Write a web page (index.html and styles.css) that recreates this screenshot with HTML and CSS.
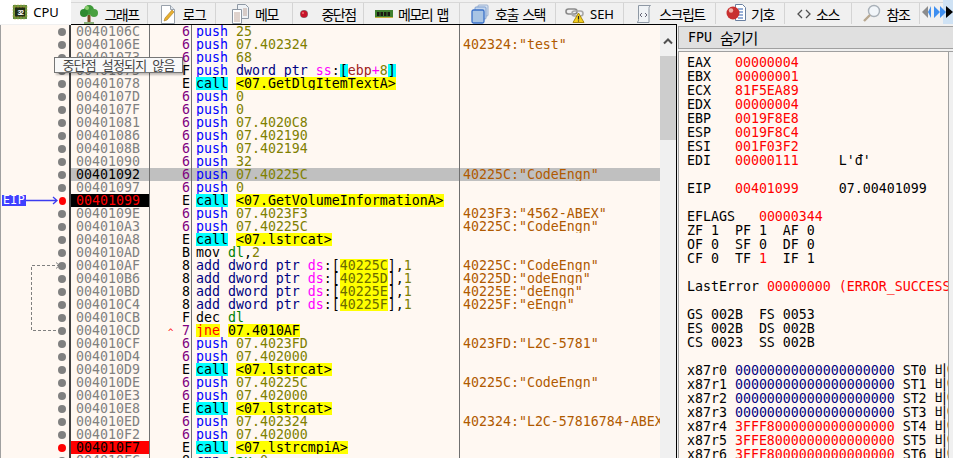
FILE: index.html
```html
<!DOCTYPE html>
<html lang="ko">
<head>
<meta charset="utf-8">
<title>x32dbg CPU</title>
<link rel="stylesheet" href="styles.css">
</head>
<body>
<nav class="tabs">
  <div class="tab active"><svg class="ico" viewBox="0 0 16 16"><rect x="1" y="1" width="14" height="14" fill="#5a8a3a"/><rect x="3" y="3" width="10" height="10" fill="#1c2a14"/><path d="M0 3h16M0 6h16M0 9h16M0 12h16M3 0v16M6 0v16M9 0v16M12 0v16" stroke="#c8b040" stroke-width=".7" opacity=".7"/><rect x="3" y="4" width="10" height="8" fill="#1c2a14"/><text x="8" y="11" class="chip">32</text></svg><span class="lat">CPU</span></div>
  <div class="tab"><svg class="ico big" viewBox="0 0 20 20"><rect x="8.500" y="11" width="3" height="7" fill="#7a4a20"/><path d="M5 19h10" stroke="#6a9a50" stroke-width="1.500"/><circle cx="10" cy="6" r="5" fill="#3f9a3a"/><circle cx="5" cy="9" r="4" fill="#2f8a30"/><circle cx="15" cy="9" r="4" fill="#4aa040"/><circle cx="8" cy="4" r="2" fill="#8fd070"/></svg><span>그래프</span></div>
  <div class="tab"><svg class="ico big" viewBox="0 0 20 20"><path d="M3.500 1.500h9l4 4v14h-13z" fill="#fff" stroke="#9aa2ac"/><path d="M12.500 1.500v4h4" fill="#dfe6ee" stroke="#9aa2ac"/><path d="M6 17l1-3 7-8 2 2-7 8z" fill="#e8b030" stroke="#a87820" stroke-width=".6"/></svg><span>로그</span></div>
  <div class="tab"><svg class="ico big" viewBox="0 0 20 20"><path d="M7.500 .5h8l3 3v11h-11z" fill="#eef2f6" stroke="#8e98a4"/><path d="M2.500 5.500h9v14h-9z" fill="#fff" stroke="#8e98a4"/><path d="M4 9h6M4 11h6M4 13h6M4 15h6M4 17h6M13 5h4M13 7h4M13 9h4M13 11h4" stroke="#b09080" stroke-width=".8"/></svg><span>메모</span></div>
  <div class="tab"><svg class="ico dot" viewBox="0 0 8 8"><circle cx="4" cy="4" r="3.500" fill="#c8142a"/><circle cx="3" cy="3" r="1" fill="#f07070"/></svg><span>중단점</span></div>
  <div class="tab"><svg class="ico ram" viewBox="0 0 18 8"><rect y="0" width="18" height="8" fill="#3f7f30"/><path d="M2 2h2.500v4H2zM5.500 2H8v4H5.500zM9 2h2.500v4H9zM12.500 2H15v4h-2.500z" fill="#1a1a10"/><path d="M0 7.500h18" stroke="#c8b040"/></svg><span>메모리 맵</span></div>
  <div class="tab"><svg class="ico big" viewBox="0 0 20 20"><rect x="8" y="1" width="10" height="11" rx="1" fill="#d4e0f0" stroke="#9ab0d0"/><rect x="5" y="3" width="11" height="12" rx="1" fill="#c4d6ec" stroke="#80a0d0"/><rect x="2" y="6" width="12" height="13" rx="1.500" fill="#a8c4e4" stroke="#3a70c8" stroke-width="1.300"/></svg><span>호출 스택</span></div>
  <div class="tab"><svg class="ico big" viewBox="0 0 20 20"><rect x="1" y="5" width="11" height="5" rx="2.500" fill="none" stroke="#8a8a8a" stroke-width="1.600"/><rect x="7" y="7" width="11" height="5" rx="2.500" fill="none" stroke="#a8a8a8" stroke-width="1.600"/><path d="M13.500 9L19 18.500H8z" fill="#f4d020" stroke="#a88810"/><path d="M13.500 12v3.500M13.500 16.500v1" stroke="#222" stroke-width="1.200"/></svg><span class="lat">SEH</span></div>
  <div class="tab"><svg class="ico big" viewBox="0 0 20 20"><path d="M4.500 1.500h12c-1.500 1-1.500 2-1.500 3v14h-12c1.500-1 1.500-2 1.500-3z" fill="#f0f3f6" stroke="#8e98a4"/><path d="M8 9l-2 2 2 2M11 9l2 2-2 2" fill="none" stroke="#667" stroke-width="1"/></svg><span>스크립트</span></div>
  <div class="tab"><svg class="ico big" viewBox="0 0 20 20"><path d="M9.500 .5h7l3 3v13h-10z" fill="#fff" stroke="#6a80a0"/><path d="M12 5h5M12 8h5M12 11h5M12 14h5" stroke="#3060b0" stroke-width="1.200"/><circle cx="7" cy="9" r="6.500" fill="#c83030"/><circle cx="5" cy="6.500" r="2.200" fill="#f0b0a8"/></svg><span>기호</span></div>
  <div class="tab"><svg class="ico src" viewBox="0 0 14 10"><path d="M5 1L1 5l4 4M9 1l4 4-4 4" fill="none" stroke="#505050" stroke-width="1.300"/></svg><span>소스</span></div>
  <div class="tab"><svg class="ico big" viewBox="0 0 20 20"><circle cx="12" cy="7" r="5.500" fill="#f2f6fa" stroke="#a8b0b8" stroke-width="1.400"/><path d="M8 11l-6 6" stroke="#b8a890" stroke-width="2.400"/></svg><span>참조</span></div>
  <div class="scroller"><svg viewBox="0 0 33 24" width="33" height="24"><rect x="23" y="0" width="10" height="24" fill="#cfe2f4"/><path d="M8 6v12l-6-6z" fill="#8c8c8c"/><path d="M11 6v12l-3-6zM14 6l6 6-6 6zM20 6l6 6-6 6z" fill="#3f8ff0"/><path d="M26 6l7 6-7 6z" fill="#000"/></svg></div>
</nav>

<main class="main">
  <section class="code">
    <div class="rows">
      <div class="row"><div class="gut"><i class="dot"></i></div><div class="addr">0040106C</div><div class="hex pu">6</div><div class="dis"><b class="bl">push</b> <b class="ol">25</b></div><div class="cmt"></div></div>
      <div class="row"><div class="gut"><i class="dot"></i></div><div class="addr">0040106E</div><div class="hex pu">6</div><div class="dis"><b class="bl">push</b> <b class="ol">07.402324</b></div><div class="cmt">402324:"test"</div></div>
      <div class="row"><div class="gut"><i class="dot"></i></div><div class="addr">00401073</div><div class="hex pu">6</div><div class="dis"><b class="bl">push</b> <b class="ol">68</b></div><div class="cmt"></div></div>
      <div class="row"><div class="gut"><i class="dot"></i></div><div class="addr">00401075</div><div class="hex">F</div><div class="dis"><b class="bl">push</b> <b class="nv">dword ptr</b> <b class="mg">ss</b><b class="k">:</b><b class="cy">[</b><b class="mr">ebp</b><b class="mg">+</b><b class="ol">8</b><b class="cy">]</b></div><div class="cmt"></div></div>
      <div class="row"><div class="gut"><i class="dot"></i></div><div class="addr">00401078</div><div class="hex">E</div><div class="dis"><b class="cy">call</b> <b class="ye">&lt;07.GetDlgItemTextA&gt;</b></div><div class="cmt"></div></div>
      <div class="row"><div class="gut"><i class="dot"></i></div><div class="addr">0040107D</div><div class="hex pu">6</div><div class="dis"><b class="bl">push</b> <b class="ol">0</b></div><div class="cmt"></div></div>
      <div class="row"><div class="gut"><i class="dot"></i></div><div class="addr">0040107F</div><div class="hex pu">6</div><div class="dis"><b class="bl">push</b> <b class="ol">0</b></div><div class="cmt"></div></div>
      <div class="row"><div class="gut"><i class="dot"></i></div><div class="addr">00401081</div><div class="hex pu">6</div><div class="dis"><b class="bl">push</b> <b class="ol">07.4020C8</b></div><div class="cmt"></div></div>
      <div class="row"><div class="gut"><i class="dot"></i></div><div class="addr">00401086</div><div class="hex pu">6</div><div class="dis"><b class="bl">push</b> <b class="ol">07.402190</b></div><div class="cmt"></div></div>
      <div class="row"><div class="gut"><i class="dot"></i></div><div class="addr">0040108B</div><div class="hex pu">6</div><div class="dis"><b class="bl">push</b> <b class="ol">07.402194</b></div><div class="cmt"></div></div>
      <div class="row"><div class="gut"><i class="dot"></i></div><div class="addr">00401090</div><div class="hex pu">6</div><div class="dis"><b class="bl">push</b> <b class="ol">32</b></div><div class="cmt"></div></div>
      <div class="row sel"><div class="gut"><i class="dot"></i></div><div class="addr">00401092</div><div class="hex pu">6</div><div class="dis"><b class="bl">push</b> <b class="ol">07.40225C</b></div><div class="cmt">40225C:"CodeEngn"</div></div>
      <div class="row"><div class="gut"><i class="dot"></i></div><div class="addr">00401097</div><div class="hex pu">6</div><div class="dis"><b class="bl">push</b> <b class="ol">0</b></div><div class="cmt"></div></div>
      <div class="row"><div class="gut"><span class="eip">EIP</span><svg class="eip-arrow" viewBox="0 0 33 9"><path d="M0 4.500h31M27 1l4 3.500-4 3.500" fill="none" stroke="#3c3cf0" stroke-width="1.300"/></svg><i class="dot red"></i></div><div class="addr cur">00401099</div><div class="hex">E</div><div class="dis"><b class="cy">call</b> <b class="ye">&lt;07.GetVolumeInformationA&gt;</b></div><div class="cmt"></div></div>
      <div class="row"><div class="gut"><i class="dot"></i></div><div class="addr">0040109E</div><div class="hex pu">6</div><div class="dis"><b class="bl">push</b> <b class="ol">07.4023F3</b></div><div class="cmt">4023F3:"4562-ABEX"</div></div>
      <div class="row"><div class="gut"><i class="dot"></i></div><div class="addr">004010A3</div><div class="hex pu">6</div><div class="dis"><b class="bl">push</b> <b class="ol">07.40225C</b></div><div class="cmt">40225C:"CodeEngn"</div></div>
      <div class="row"><div class="gut"><i class="dot"></i></div><div class="addr">004010A8</div><div class="hex">E</div><div class="dis"><b class="cy">call</b> <b class="ye">&lt;07.lstrcat&gt;</b></div><div class="cmt"></div></div>
      <div class="row"><div class="gut"><i class="dot"></i></div><div class="addr">004010AD</div><div class="hex">B</div><div class="dis"><b class="k">mov</b> <b class="gr">dl</b><b class="k">,</b><b class="ol">2</b></div><div class="cmt"></div></div>
      <div class="row"><div class="gut"><i class="dot"></i></div><div class="addr">004010AF</div><div class="hex">8</div><div class="dis"><b class="nv">add dword ptr</b> <b class="mg">ds</b><b class="k">:[</b><b class="ye ol">40225C</b><b class="k">],</b><b class="ol">1</b></div><div class="cmt">40225C:"CodeEngn"</div></div>
      <div class="row"><div class="gut"><i class="dot"></i></div><div class="addr">004010B6</div><div class="hex">8</div><div class="dis"><b class="nv">add dword ptr</b> <b class="mg">ds</b><b class="k">:[</b><b class="ye ol">40225D</b><b class="k">],</b><b class="ol">1</b></div><div class="cmt">40225D:"odeEngn"</div></div>
      <div class="row"><div class="gut"><i class="dot"></i></div><div class="addr">004010BD</div><div class="hex">8</div><div class="dis"><b class="nv">add dword ptr</b> <b class="mg">ds</b><b class="k">:[</b><b class="ye ol">40225E</b><b class="k">],</b><b class="ol">1</b></div><div class="cmt">40225E:"deEngn"</div></div>
      <div class="row"><div class="gut"><i class="dot"></i></div><div class="addr">004010C4</div><div class="hex">8</div><div class="dis"><b class="nv">add dword ptr</b> <b class="mg">ds</b><b class="k">:[</b><b class="ye ol">40225F</b><b class="k">],</b><b class="ol">1</b></div><div class="cmt">40225F:"eEngn"</div></div>
      <div class="row"><div class="gut"><i class="dot"></i></div><div class="addr">004010CB</div><div class="hex">F</div><div class="dis"><b class="k">dec</b> <b class="gr">dl</b></div><div class="cmt"></div></div>
      <div class="row"><div class="gut"><i class="dot"></i></div><div class="addr">004010CD</div><div class="hex pu"><span class="up">^</span>7</div><div class="dis"><b class="jn">jne</b> <b class="ye">07.4010AF</b></div><div class="cmt"></div></div>
      <div class="row"><div class="gut"><i class="dot"></i></div><div class="addr">004010CF</div><div class="hex pu">6</div><div class="dis"><b class="bl">push</b> <b class="ol">07.4023FD</b></div><div class="cmt">4023FD:"L2C-5781"</div></div>
      <div class="row"><div class="gut"><i class="dot"></i></div><div class="addr">004010D4</div><div class="hex pu">6</div><div class="dis"><b class="bl">push</b> <b class="ol">07.402000</b></div><div class="cmt"></div></div>
      <div class="row"><div class="gut"><i class="dot"></i></div><div class="addr">004010D9</div><div class="hex">E</div><div class="dis"><b class="cy">call</b> <b class="ye">&lt;07.lstrcat&gt;</b></div><div class="cmt"></div></div>
      <div class="row"><div class="gut"><i class="dot"></i></div><div class="addr">004010DE</div><div class="hex pu">6</div><div class="dis"><b class="bl">push</b> <b class="ol">07.40225C</b></div><div class="cmt">40225C:"CodeEngn"</div></div>
      <div class="row"><div class="gut"><i class="dot"></i></div><div class="addr">004010E3</div><div class="hex pu">6</div><div class="dis"><b class="bl">push</b> <b class="ol">07.402000</b></div><div class="cmt"></div></div>
      <div class="row"><div class="gut"><i class="dot"></i></div><div class="addr">004010E8</div><div class="hex">E</div><div class="dis"><b class="cy">call</b> <b class="ye">&lt;07.lstrcat&gt;</b></div><div class="cmt"></div></div>
      <div class="row"><div class="gut"><i class="dot"></i></div><div class="addr">004010ED</div><div class="hex pu">6</div><div class="dis"><b class="bl">push</b> <b class="ol">07.402324</b></div><div class="cmt">402324:"L2C-57816784-ABEX"</div></div>
      <div class="row"><div class="gut"><i class="dot"></i></div><div class="addr">004010F2</div><div class="hex pu">6</div><div class="dis"><b class="bl">push</b> <b class="ol">07.402000</b></div><div class="cmt"></div></div>
      <div class="row"><div class="gut"><i class="dot red"></i></div><div class="addr bp">004010F7</div><div class="hex">E</div><div class="dis"><b class="cy">call</b> <b class="ye">&lt;07.lstrcmpiA&gt;</b></div><div class="cmt"></div></div>
      <div class="row"><div class="gut"><i class="dot"></i></div><div class="addr">004010FC</div><div class="hex">8</div><div class="dis"><b class="nv">cmp</b> <b class="gr">eax</b><b class="k">,</b><b class="ol">0</b></div><div class="cmt"></div></div>
    </div>
    <div class="vscroll"><svg class="vup" viewBox="0 0 16 30"><path d="M4 18l4-4 4 4" fill="none" stroke="#505050" stroke-width="2"/></svg><div class="thumb"></div></div>
    <svg class="jump" viewBox="0 0 40 80"><path d="M30 1.500H1.500V66.500H29" fill="none" stroke="#808080" stroke-dasharray="3 2"/><path d="M26 -1.500l3.500 3-3.500 3" fill="none" stroke="#808080"/></svg>
    <div class="tooltip">중단점 설정되지 않음</div>
  </section>

  <aside class="side">
    <div class="fpu"><span class="lat">FPU</span> <span>숨기기</span></div>
    <div class="regs-wrap">
<pre class="regs">EAX   <em>00000004</em>
EBX   <em>00000001</em>
ECX   <em>81F5EA89</em>
EDX   <em>00000004</em>
EBP   <em>0019F8E8</em>
ESP   <em>0019F8C4</em>
ESI   <em>001F03F2</em>
EDI   <em>00000111</em>     L'đ'

EIP   <em>00401099</em>     07.00401099

EFLAGS   <em>00000344</em>
ZF 1  PF 1  AF 0
OF 0  SF 0  DF 0
CF 0  TF <em>1</em>  IF 1

LastError <em>00000000 (ERROR_SUCCESS)</em>

GS 002B  FS 0053
ES 002B  DS 002B
CS 0023  SS 002B

x87r0 <span class="nv">00000000000000000000</span> ST0 비어 있음
x87r1 <span class="nv">00000000000000000000</span> ST1 비어 있음
x87r2 <span class="nv">00000000000000000000</span> ST2 비어 있음
x87r3 <span class="nv">00000000000000000000</span> ST3 비어 있음
x87r4 <em>3FFF8000000000000000</em> ST4 비어 있음
x87r5 <em>3FFE8000000000000000</em> ST5 비어 있음
x87r6 <em>3FFF8000000000000000</em> ST6 비어 있음</pre>
      <div class="side-scroll"></div>
    </div>
  </aside>
</main>
</body>
</html>
```
FILE: styles.css
```css
* { box-sizing: border-box; }
html, body { margin: 0; height: 100%; overflow: hidden; }
body {
  display: flex;
  flex-direction: column;
  background: #f0f0f0;
  font-family: "Noto Sans CJK KR", "Noto Sans", sans-serif;
  color: #000;
}

/* tab strip */
.tabs {
  flex: 0 0 24px;
  height: 24px;
  display: grid;
  grid-template-columns: 71px 77px 68px 77px 71px 96px 96px 68px 92px 69px 67px 68px 33px;
  grid-template-rows: 21px;
  padding-top: 3px;
  background: linear-gradient(#f0f0f0 2px, #d8d8d8 2px, #d8d8d8 3px, #f0f0f0 3px);
}
.tab {
  display: flex;
  align-items: center;
  justify-content: center;
  gap: 5px;
  height: 21px;
  border-right: 1px solid #d4d4d4;
  font-size: 14px;
  letter-spacing: -1.500px;
  word-spacing: 2px;
  white-space: nowrap;
}
.tab.active {
  margin-top: -3px;
  height: 24px;
  background: #fff;
  border-right: 0;
}
.lat { font-family: "Noto Sans", sans-serif; letter-spacing: 0; }
.tab .lat { font-size: 13px; }
.ico { width: 16px; height: 16px; flex: none; }
.ico.big { width: 20px; height: 20px; }
.ico.dot { width: 8px; height: 8px; margin-right: 8px; }
.ico.ram { width: 18px; height: 8px; }
.ico.src { width: 14px; height: 10px; }
.chip { font: bold 7px "Liberation Sans", sans-serif; fill: #fff; text-anchor: middle; }
.scroller { overflow: hidden; margin-top: -3px; height: 24px; }
.scroller svg { display: block; }

/* main split */
.main { flex: 1; display: flex; min-height: 0; }

/* disassembly */
.code {
  position: relative;
  flex: 0 0 677px;
  display: flex;
  padding-top: 1px;
  border-right: 1px solid #000;
  background: #f0f0f0;
}
.code::before {
  content: "";
  position: absolute;
  top: 0;
  left: 71px;
  right: 0;
  height: 1px;
  background: #000;
}
.rows {
  flex: 0 0 660px;
  overflow: hidden;
  background: #fff8f2;
  border-left: 1px solid #a0a0a0;
  font: 13.280px/13px "DejaVu Sans Mono", "Noto Sans CJK KR", monospace;
}
.row {
  display: grid;
  grid-template-columns: 70px 79px 42px 268px 1fr;
  height: 13px;
  white-space: pre;
}
.row b { font-weight: normal; }
.gut {
  display: flex;
  align-items: center;
  justify-content: flex-end;
  padding-right: 3px;
  background: #fff8f2;
  border-right: 2px solid #404040;
}
.dot { width: 8px; height: 8px; border-radius: 50%; background: #808080; }
.dot.red { background: #ff0000; }
.eip {
  margin-right: auto;
  margin-left: 1px;
  padding: 0 1px;
  background: #4040ff;
  color: #fff;
  font-size: 11.500px;
  line-height: 11px;
  letter-spacing: .4px;
}
.eip-arrow { width: 33px; height: 9px; flex: none; }
.addr {
  padding-left: 5px;
  color: #808080;
  border-right: 1px solid #707070;
}
.addr.cur { background: #000; color: #ff0000; }
.addr.bp { background: #ff0000; color: #000; }
.sel .addr { color: #000; }
.hex {
  position: relative;
  text-align: right;
  padding-right: 1px;
  border-right: 1px solid #707070;
}
.pu { color: #800080; }
.up { position: absolute; left: 18px; top: 2px; color: #ff0000; font-size: 9px; }
.dis {
  padding-left: 4px;
  border-right: 1px solid #707070;
  overflow: hidden;
}
.cmt {
  padding-left: 3px;
  color: #b05a00;
  overflow: hidden;
}
.sel .addr, .sel .hex, .sel .dis, .sel .cmt { background: #c0c0c0; }
.bl { color: #0000ff; }
.ol { color: #808000; }
.nv { color: #000080; }
.mg { color: #ff00ff; }
.mr { color: #a02020; }
.gr { color: #008000; }
.k { color: #000; }
.cy { background: #00ffff; color: #000; }
.ye { background: #ffff00; color: #000; }
.ye.ol { color: #6a6a00; }
.jn { background: #ffff00; color: #ff0000; }

.vscroll {
  flex: 0 0 16px;
  display: flex;
  flex-direction: column;
  background: #f0f0f0;
}
.vup { width: 16px; height: 31px; flex: none; }
.thumb { height: 84px; background: #cdcdcd; }

.jump {
  position: absolute;
  left: 30px;
  top: 240px;
  width: 40px;
  height: 80px;
  overflow: visible;
}
.tooltip {
  position: absolute;
  left: 54px;
  top: 33px;
  width: 129px;
  height: 16px;
  border: 1px solid #767676;
  background: #f9f9f9;
  box-shadow: 2px 2px 2px rgba(0, 0, 0, .25);
  color: #444;
  font-size: 13px;
  line-height: 14px;
  letter-spacing: -.8px;
  word-spacing: 3px;
  text-align: center;
  white-space: nowrap;
}

/* registers */
.side { flex: 1; min-width: 0; display: flex; flex-direction: column; padding: 2px 0 0 1px; }
.fpu {
  flex: 0 0 20px;
  display: flex;
  align-items: center;
  gap: 8px;
  padding-left: 9px;
  border: 1px solid #a0a0a0;
  border-right: 0;
  background: #e0e0e0;
  font-size: 15px;
  letter-spacing: -1.500px;
}
.fpu .lat { font: 13.280px "DejaVu Sans Mono", monospace; letter-spacing: 0; }
.regs-wrap {
  flex: 1;
  min-height: 0;
  margin-top: 2px;
  display: flex;
  border-top: 1px solid #a0a0a0;
}
.regs {
  flex: 1;
  min-width: 0;
  margin: 0;
  padding: 4px 0 0 8px;
  overflow: hidden;
  background: #fff8f2;
  border-left: 1px solid #a0a0a0;
  font: 13.280px/14px "DejaVu Sans Mono", "Noto Sans CJK KR", monospace;
  color: #000;
}
.regs em { font-style: normal; color: #ff0000; }
.side-scroll { flex: 0 0 5px; background: #f0f0f0; border-left: 1px solid #a0a0a0; }
```
